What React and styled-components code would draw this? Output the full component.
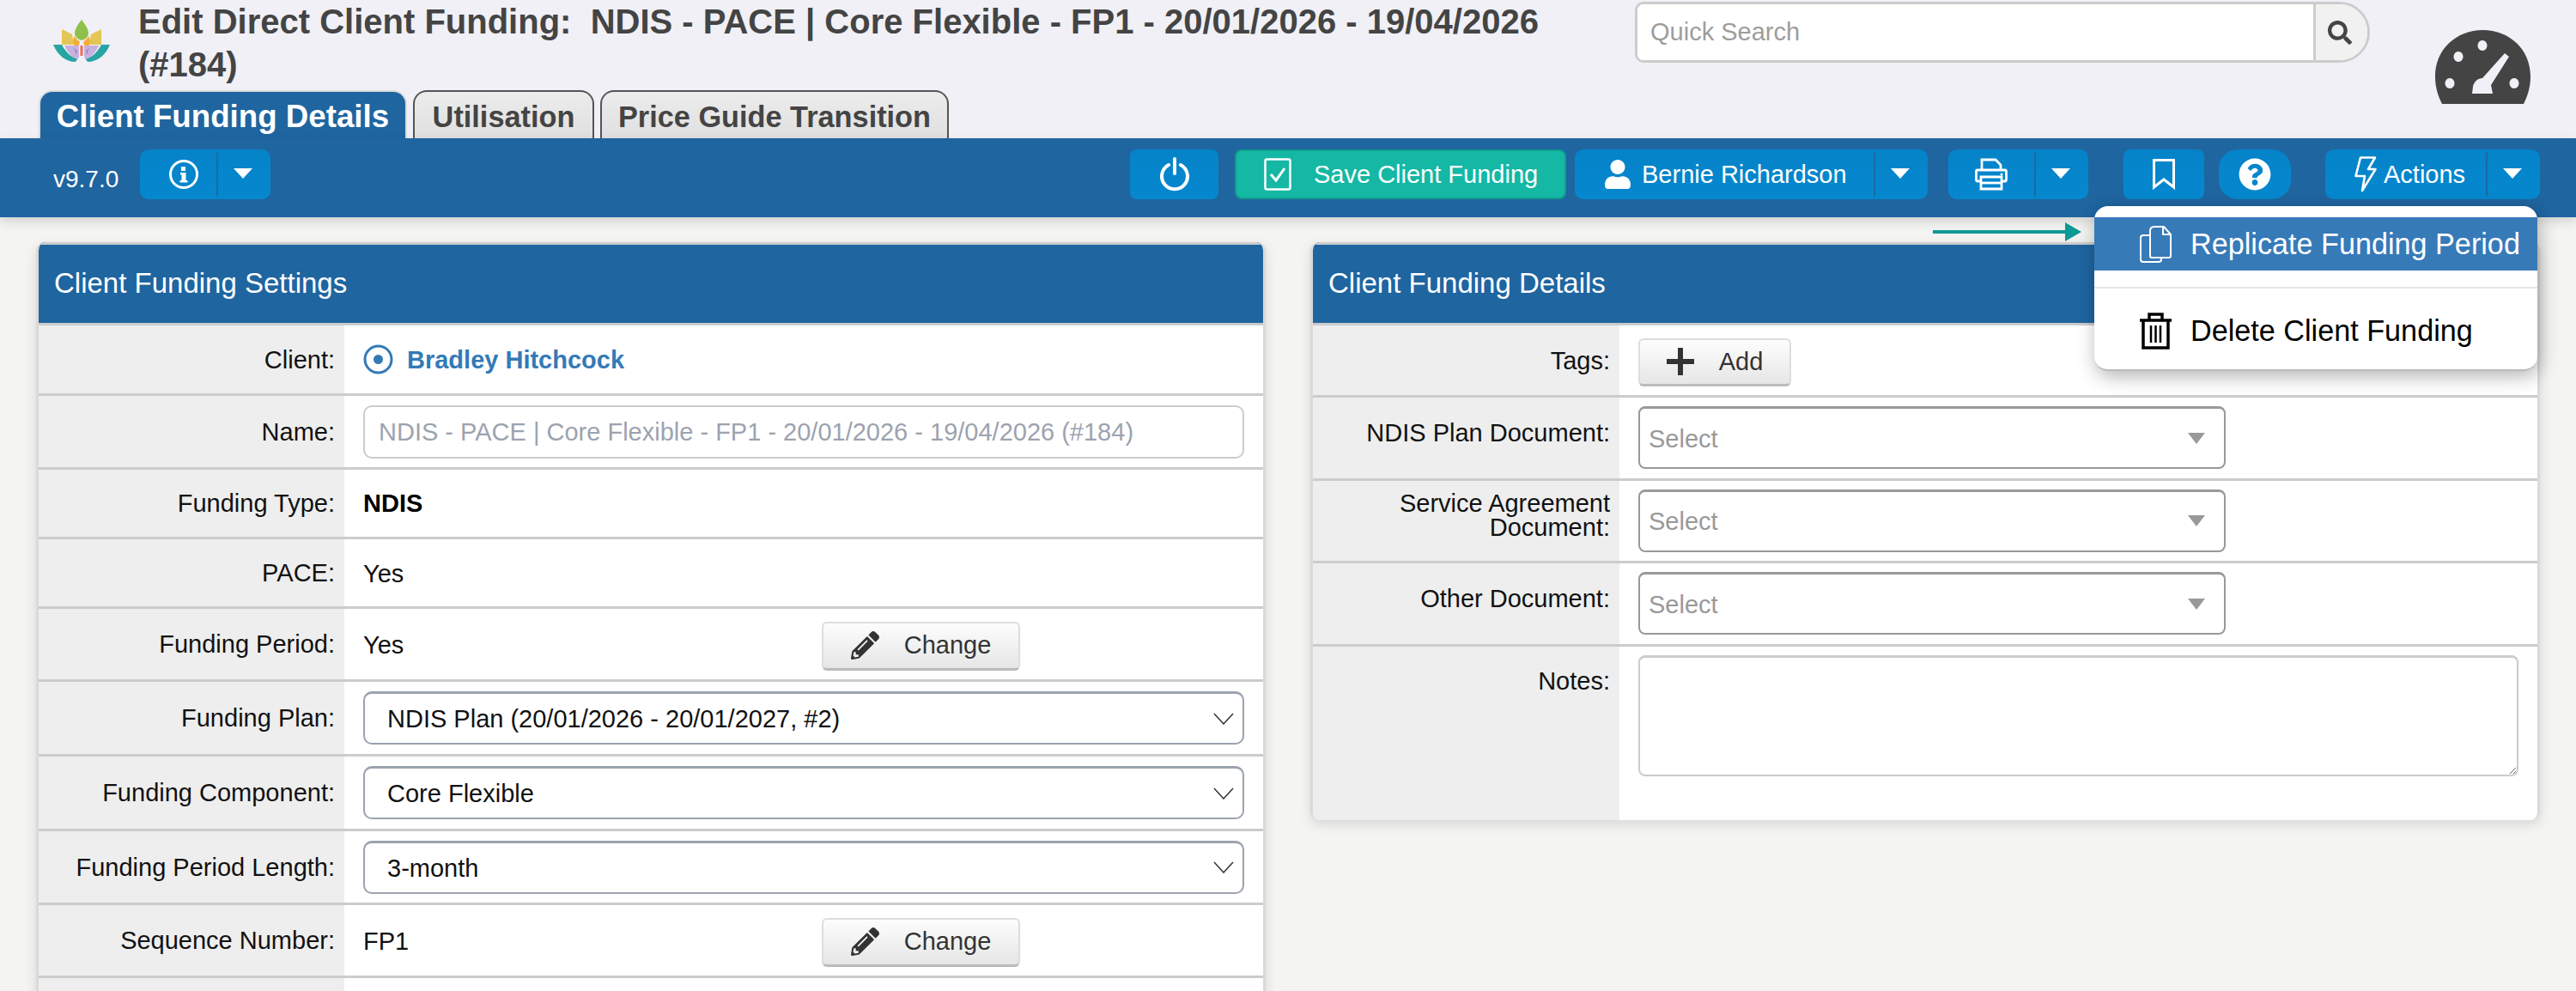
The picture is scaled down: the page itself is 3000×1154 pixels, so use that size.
import React from 'react'
import styled, { createGlobalStyle } from 'styled-components'
import { FaSearch, FaPencilAlt, FaQuestionCircle, FaUser } from 'react-icons/fa'

const GlobalStyle = createGlobalStyle`
  html, body {
    margin: 0;
    padding: 0;
    background: #f4f4f2;
    overflow: hidden;
  }
  * { box-sizing: border-box; }
  #root {
    width: 3000px;
    height: 1154px;
    overflow: hidden;
    font-family: "Liberation Sans", Arial, sans-serif;
  }
`

const leftRows = [
  { label: 'Client:', h: 82, kind: 'client' },
  { label: 'Name:', h: 86, kind: 'name' },
  { label: 'Funding Type:', h: 81, kind: 'bold', value: 'NDIS' },
  { label: 'PACE:', h: 81, kind: 'text', value: 'Yes' },
  { label: 'Funding Period:', h: 85, kind: 'change', value: 'Yes' },
  { label: 'Funding Plan:', h: 87, kind: 'select', value: 'NDIS Plan (20/01/2026 - 20/01/2027, #2)' },
  { label: 'Funding Component:', h: 87, kind: 'select', value: 'Core Flexible' },
  { label: 'Funding Period Length:', h: 86, kind: 'select', value: '3-month' },
  { label: 'Sequence Number:', h: 85, kind: 'change', value: 'FP1' },
  { label: '', h: 85, kind: 'empty' },
]

const docRows = [
  { label: 'NDIS Plan Document:' },
  { label: 'Service Agreement Document:' },
  { label: 'Other Document:' },
]

function Logo() {
  return (
    <LogoSvg viewBox='0 0 66 50'>
      <path d='M33 1 C37 6 41 12 41 17 C41 21 37 24 33 25 C29 24 25 21 25 17 C25 12 29 6 33 1 Z' fill='#8fc04a' />
      <path d='M10 12 L22 18 L24 30 H10 Z' fill='#e3c655' />
      <path d='M56 12 L44 18 L42 30 H56 Z' fill='#e3c655' />
      <path d='M24 20 L31 27 L29 33 H25 L23 27 Z' fill='#f5ab36' />
      <path d='M42 20 L35 27 L37 33 H41 L43 27 Z' fill='#f5ab36' />
      <path d='M13 31 H30 V44 L28 48 C21 44 16 38 13 31 Z' fill='#c7b1dd' />
      <path d='M53 31 H36 V44 L38 48 C45 44 50 38 53 31 Z' fill='#c7b1dd' />
      <path d='M24 34 L28 37 L27 42 Z M42 34 L38 37 L39 42 Z' fill='#a487c9' />
      <path d='M31.500 31 H34.500 V43 H31.500 Z' fill='#ee6d57' />
      <path d='M0 30 H10 C14 38 20 44 28 47 L26 50 C14 50 5 42 0 30 Z' fill='#27a5a3' />
      <path d='M66 30 H56 C52 38 46 44 38 47 L40 50 C52 50 61 42 66 30 Z' fill='#27a5a3' />
    </LogoSvg>
  )
}

function Gauge() {
  return (
    <GaugeSvg viewBox='0 0 111 86' preserveAspectRatio='none'>
      <path
        fill='#444'
        fillRule='evenodd'
        d='M8 86 C3 76 0 66 0 54 C0 22 25 0 55.500 0 C86 0 111 22 111 54 C111 66 108 76 103 86 Z
           M55 12 a5.500 6 0 1 0 .01 0 Z
           M27 25 a5.500 6 0 1 0 .01 0 Z
           M17 56 a5.500 6 0 1 0 .01 0 Z
           M92 56 a5.500 6 0 1 0 .01 0 Z
           M81 27 L86 31 L65 64 L67 74 H43 L44 66 C45 60 50 56 55 56 Z'
      />
    </GaugeSvg>
  )
}

function Caret() {
  return <CaretShape />
}

function ChevronDown() {
  return (
    <svg width='24' height='14' viewBox='0 0 24 14' fill='none' stroke='#333' strokeWidth='1.500'>
      <path d='M1 1 L12 13 L23 1' />
    </svg>
  )
}

function ChangeButton() {
  return (
    <GreyButton $w={231} $h={57}>
      <FaPencilAlt size={33} color='#333' />
      <span>Change</span>
    </GreyButton>
  )
}

function SettingsValue({ row }) {
  if (row.kind === 'client') {
    return (
      <ClientLink>
        <svg width='35' height='35' viewBox='0 0 35 35'>
          <circle cx='17.500' cy='17.500' r='15.500' fill='none' stroke='#337ab7' strokeWidth='3' />
          <circle cx='17.500' cy='17.500' r='5.500' fill='#337ab7' />
        </svg>
        <CellText>Bradley Hitchcock</CellText>
      </ClientLink>
    )
  }
  if (row.kind === 'name') {
    return <NameInput readOnly value='NDIS - PACE | Core Flexible - FP1 - 20/01/2026 - 19/04/2026 (#184)' />
  }
  if (row.kind === 'bold') return <BoldValue>{row.value}</BoldValue>
  if (row.kind === 'text') return <CellText>{row.value}</CellText>
  if (row.kind === 'change') {
    return (
      <ChangeLine>
        <CellText>{row.value}</CellText>
        <ChangeButton />
      </ChangeLine>
    )
  }
  if (row.kind === 'select') {
    return (
      <PlainSelect>
        <CellText>{row.value}</CellText>
        <ChevronDown />
      </PlainSelect>
    )
  }
  return null
}

export default function App() {
  return (
    <Page>
      <GlobalStyle />
      <Header>
        <HeaderMain>
          <Logo />
          <Title>Edit Direct Client Funding:&nbsp; NDIS - PACE | Core Flexible - FP1 - 20/01/2026 - 19/04/2026 (#184)</Title>
          <SearchBox>
            <SearchInput placeholder='Quick Search' />
            <SearchBtn><FaSearch size={28} color='#444' /></SearchBtn>
          </SearchBox>
          <Gauge />
        </HeaderMain>
        <Tabs>
          <Tab $active>Client Funding Details</Tab>
          <Tab $w={211}>Utilisation</Tab>
          <Tab $w={406}>Price Guide Transition</Tab>
        </Tabs>
      </Header>

      <Toolbar>
        <Version>v9.7.0</Version>
        <SplitButton $w={152}>
          <SplitMain $pad={33}>
            <svg width='36' height='36' viewBox='0 0 36 36'>
              <circle cx='18' cy='18' r='15.500' fill='none' stroke='#fff' strokeWidth='3' />
              <path d='M15 9 h5 v5 h-5 Z M14 16 h6.500 v9 h2 v2.500 h-9 V25 h2 v-6.500 h-1.500 Z' fill='#fff' />
            </svg>
          </SplitMain>
          <Caret />
        </SplitButton>
        <ToolbarSpacer />
        <ToolButton $w={103}>
          <svg width='36' height='40' viewBox='0 0 36 40' fill='none' stroke='#fff' strokeWidth='4' strokeLinecap='round'>
            <path d='M11 9 A15 15 0 1 0 25 9' />
            <path d='M18 2 V19' />
          </svg>
        </ToolButton>
        <SaveButton>
          <svg width='32' height='38' viewBox='0 0 32 38' fill='none' stroke='#fff' strokeWidth='2.500'>
            <rect x='1.500' y='1.500' width='29' height='35' rx='2' />
            <path d='M8 19 L14 26 L24 12' strokeWidth='3' />
          </svg>
          <span>Save Client Funding</span>
        </SaveButton>
        <SplitButton $w={411} $left={10}>
          <SplitMain $pad={33}>
            <FaUser size={34} color='#fff' />
            <span>Bernie Richardson</span>
          </SplitMain>
          <Caret />
        </SplitButton>
        <SplitButton $w={163} $left={24}>
          <SplitMain>
            <svg width='38' height='38' viewBox='0 0 38 38' fill='none' stroke='#fff' strokeWidth='2.800'>
              <path d='M8 14 V2 H24 L30 8 V14' />
              <path d='M7 27 H3 Q1.500 27 1.500 25 V16 Q1.500 14 3 14 H35 Q36.500 14 36.500 16 V25 Q36.500 27 35 27 H31' />
              <path d='M7 22 H31 V36 H7 Z' />
              <path d='M7 29 H31' />
              <circle cx='31' cy='19' r='1.500' fill='#fff' stroke='none' />
            </svg>
          </SplitMain>
          <Caret />
        </SplitButton>
        <ToolButton $w={94} $left={41}>
          <svg width='26' height='36' viewBox='0 0 26 36' fill='none' stroke='#fff' strokeWidth='3'>
            <path d='M1.500 1.500 H24.500 V33 L13 24 L1.500 33 Z' />
          </svg>
        </ToolButton>
        <ToolButton $w={84} $left={17} $round>
          <FaQuestionCircle size={38} color='#fff' />
        </ToolButton>
        <SplitButton $w={250} $left={40}>
          <SplitMain $pad={34}>
            <svg width='26' height='42' viewBox='0 0 26 42' fill='none' stroke='#fff' strokeWidth='2.600' strokeLinejoin='round'>
              <path d='M7 1.500 H24 L16 15 H24.500 L9 40 L12 23 H1.500 Z' />
            </svg>
            <ActionsLabel>Actions</ActionsLabel>
          </SplitMain>
          <Caret />
        </SplitButton>

        <Pointer>
          <svg width='173' height='22' viewBox='0 0 173 22'>
            <path d='M0 9 H154 V0 L173 11 L154 22 V13 H0 Z' fill='#0e9a94' />
          </svg>
        </Pointer>

        <ActionsMenu>
          <MenuItem $active>
            <svg width='37' height='43' viewBox='0 0 37 43' fill='none' stroke='#fff' strokeWidth='2'>
              <path d='M12 6 V35 Q12 37 14 37 H34 Q36 37 36 35 V10 L28 1 H17 Q12 1 12 6 Z' />
              <path d='M27 1 V10 H36' />
              <path d='M12 11 H4 Q1 11 1 14 V39 Q1 42 4 42 H22 Q25 42 25 39 V37' />
            </svg>
            <span>Replicate Funding Period</span>
          </MenuItem>
          <MenuDivider />
          <MenuItem>
            <svg width='37' height='43' viewBox='0 0 37 43' fill='none' stroke='#000' strokeWidth='3.500'>
              <path d='M0 9 H37' />
              <path d='M11 8 V2 H26 V8' />
              <path d='M4 9 V41 H33 V9' />
              <path d='M13 15 V35 M18.500 15 V35 M24 15 V35' strokeWidth='2.500' />
            </svg>
            <span>Delete Client Funding</span>
          </MenuItem>
        </ActionsMenu>
      </Toolbar>

      <Content>
        <Panel>
          <PanelHead>Client Funding Settings</PanelHead>
          {leftRows.map((row, i) => (
            <Row key={i} $h={row.h} $col={356}>
              <RowLabel>{row.label}</RowLabel>
              <RowValue $left={22} $right={22}>
                <SettingsValue row={row} />
              </RowValue>
            </Row>
          ))}
        </Panel>

        <Panel>
          <PanelHead>Client Funding Details</PanelHead>
          <Row $h={84} $col={357}>
            <RowLabel>Tags:</RowLabel>
            <RowValue $left={22}>
              <GreyButton $w={178} $h={56}>
                <svg width='32' height='32' viewBox='0 0 32 32'>
                  <path d='M13 0 H19 V13 H32 V19 H19 V32 H13 V19 H0 V13 H13 Z' fill='#333' />
                </svg>
                <span>Add</span>
              </GreyButton>
            </RowValue>
          </Row>
          {docRows.map((row) => (
            <Row key={row.label} $h={96.500} $col={357} $liftLabel>
              <RowLabel>{row.label}</RowLabel>
              <RowValue $left={22}>
                <DocSelect>
                  <CellText>Select</CellText>
                  <SelectCaret />
                </DocSelect>
              </RowValue>
            </Row>
          ))}
          <Row $h={202} $col={357} $last>
            <NotesLabel>Notes:</NotesLabel>
            <RowValue $left={22} $top={10}>
              <NotesArea />
            </RowValue>
          </Row>
        </Panel>
      </Content>
    </Page>
  )
}

const Page = styled.div`
  width: 3000px;
  height: 1154px;
  position: relative;
  background: #f4f4f2;
`
const Header = styled.header`
  height: 161px;
  background: #f0f0f6;
  display: flex;
  flex-direction: column;
`
const HeaderMain = styled.div`
  height: 105px;
  display: flex;
  align-items: flex-start;
  padding-left: 62px;
`
const LogoSvg = styled.svg`
  width: 66px;
  height: 50px;
  margin-top: 22px;
  flex: none;
`
const Title = styled.h1`
  margin: 0 0 0 33px;
  width: 1700px;
  flex: none;
  font-size: 40px;
  line-height: 50px;
  font-weight: 700;
  color: #444;
`
const SearchBox = styled.div`
  margin: 2px 0 0 43px;
  width: 856px;
  height: 71px;
  flex: none;
  display: flex;
  background: #fff;
  border: 3px solid #ccc;
  border-radius: 10px 36px 36px 10px;
  overflow: hidden;
`
const SearchInput = styled.input`
  flex: 1;
  min-width: 0;
  border: 0;
  outline: 0;
  padding: 0 15px;
  font: 29px "Liberation Sans", Arial, sans-serif;
  &::placeholder { color: #9d9d9d; opacity: 1; }
`
const SearchBtn = styled.div`
  width: 63px;
  flex: none;
  background: #f1f1f1;
  border-left: 3px solid #ccc;
  display: flex;
  align-items: center;
  justify-content: center;
  padding-right: 4px;
`
const GaugeSvg = styled.svg`
  width: 111px;
  height: 86px;
  margin: 35px 0 0 76px;
  flex: none;
`
const Tabs = styled.nav`
  height: 56px;
  display: flex;
  align-items: flex-end;
  gap: 7px;
  padding-left: 45px;
`
const Tab = styled.div`
  height: 56px;
  width: ${(p) => (p.$w ? `${p.$w}px` : '429px')};
  flex: none;
  display: flex;
  align-items: center;
  justify-content: center;
  font-size: ${(p) => (p.$active ? '36.700px' : '34.300px')};
  font-weight: 700;
  padding-top: 4px;
  border-radius: 16px 16px 0 0;
  border: 2px solid ${(p) => (p.$active ? '#dcdcdc' : '#555')};
  border-bottom: 0;
  color: ${(p) => (p.$active ? '#fff' : '#444')};
  background: ${(p) => (p.$active ? '#1f65a0' : 'linear-gradient(#ececec, #e0e0e0)')};
`
const Toolbar = styled.div`
  height: 92px;
  background: #1f65a0;
  display: flex;
  align-items: flex-start;
  padding: 13px 42px 0 62px;
  position: relative;
  box-shadow: 0 5px 12px rgba(0, 0, 0, 0.14);
  z-index: 2;
`
const Version = styled.span`
  width: 101px;
  flex: none;
  font-size: 28px;
  line-height: 70px;
  color: #fff;
`
const ToolbarSpacer = styled.div`
  flex: 1;
`
const ToolButton = styled.div`
  width: ${(p) => p.$w}px;
  height: 58px;
  flex: none;
  margin-left: ${(p) => p.$left || 0}px;
  display: flex;
  align-items: center;
  justify-content: center;
  border-radius: ${(p) => (p.$round ? '22px' : '8px')};
  background: linear-gradient(#0583c9, #0688ce);
`
const SaveButton = styled.div`
  width: 386px;
  height: 58px;
  flex: none;
  margin-left: 19px;
  display: flex;
  align-items: center;
  gap: 26px;
  padding-left: 32px;
  border-radius: 8px;
  border: 2px solid #109c8c;
  background: #14b8a4;
  color: #fff;
  font-size: 29px;
`
const SplitButton = styled.div`
  width: ${(p) => p.$w}px;
  height: 58px;
  flex: none;
  margin-left: ${(p) => p.$left || 0}px;
  display: flex;
  border-radius: 10px;
  background: linear-gradient(#0583c9, #0688ce);
  color: #fff;
  font-size: 29px;
`
const SplitMain = styled.div`
  flex: 1;
  min-width: 0;
  display: flex;
  align-items: center;
  gap: 11px;
  justify-content: ${(p) => (p.$pad ? 'flex-start' : 'center')};
  padding-left: ${(p) => p.$pad || 0}px;
`
const ActionsLabel = styled.span`
  margin-left: -3px;
`
const CaretShape = styled.div`
  width: 63px;
  flex: none;
  align-self: stretch;
  position: relative;
  margin: 3px 0;
  border-left: 2px solid #1b6aa3;
  &::after {
    content: '';
    position: absolute;
    top: 19px;
    left: 18px;
    border-style: solid;
    border-width: 12px 11px 0 11px;
    border-color: #fff transparent transparent transparent;
  }
`
const Pointer = styled.div`
  position: absolute;
  left: 2251px;
  top: 98px;
  line-height: 0;
  z-index: 3;
`
const ActionsMenu = styled.div`
  position: absolute;
  left: 2439px;
  top: 79px;
  width: 516px;
  height: 192px;
  padding-top: 13px;
  background: #fff;
  border-radius: 16px;
  border-bottom: 2px solid #bbb;
  box-shadow: 2px 6px 22px rgba(0, 0, 0, 0.3);
  z-index: 4;
`
const MenuItem = styled.div`
  height: 62px;
  display: flex;
  align-items: center;
  gap: 22px;
  padding-left: 53px;
  font-size: 34.200px;
  background: ${(p) => (p.$active ? '#377ab8' : 'transparent')};
  color: ${(p) => (p.$active ? '#fff' : '#000')};
  & + div { margin-top: 19px; }
`
const MenuDivider = styled.div`
  height: 2px;
  background: #e5e5e5;
  margin-bottom: 18px;
`
const Content = styled.main`
  display: flex;
  align-items: flex-start;
  gap: 52px;
  padding: 29px 0 0 42px;
`
const Panel = styled.section`
  width: 1432px;
  flex: none;
  background: #fff;
  border: 3px solid #dcdad7;
  border-top: 0;
  border-bottom: 0;
  border-radius: 10px;
  box-shadow: 0 5px 14px rgba(0, 0, 0, 0.12);
  overflow: hidden;
`
const PanelHead = styled.div`
  height: 97px;
  padding: 0 0 2px 18px;
  display: flex;
  align-items: center;
  font-size: 33px;
  color: #fff;
  background: #1f65a0;
  border-top: 3px solid #ccc;
  border-bottom: 3px solid #ccc;
`
const Row = styled.div`
  height: ${(p) => p.$h}px;
  display: grid;
  grid-template-columns: ${(p) => p.$col}px 1fr;
  border-bottom: ${(p) => (p.$last ? '0' : '3px solid #ccc')};
  & > label {
    padding-bottom: ${(p) => (p.$liftLabel ? '12px' : '0')};
  }
`
const RowLabel = styled.label`
  background: #eee;
  display: flex;
  align-items: center;
  justify-content: flex-end;
  text-align: right;
  padding-left: 8px;
  padding-right: 11px;
  font-size: 29px;
  line-height: 28px;
  color: #111;
`
const NotesLabel = styled(RowLabel)`
  align-items: flex-start;
  padding-top: 26px;
`
const RowValue = styled.div`
  padding: ${(p) => p.$top || 0}px ${(p) => p.$right || 0}px 0 ${(p) => p.$left || 0}px;
  display: flex;
  align-items: ${(p) => (p.$top ? 'flex-start' : 'center')};
  font-size: 29px;
  color: #111;
`
const CellText = styled.span`
  position: relative;
  top: 1px;
  color: inherit;
`
const ClientLink = styled.a`
  display: flex;
  align-items: center;
  gap: 16px;
  font-weight: 700;
  color: #337ab7;
`
const NameInput = styled.input`
  width: 100%;
  height: 62px;
  padding: 2px 16px 0;
  border: 2px solid #ccc;
  border-radius: 10px;
  outline: 0;
  font: 29px "Liberation Sans", Arial, sans-serif;
  color: #9ca3af;
  background: #fff;
`
const BoldValue = styled.b`
  color: #000;
`
const ChangeLine = styled.div`
  width: 100%;
  display: grid;
  grid-template-columns: 534px auto;
  align-items: center;
`
const GreyButton = styled.div`
  width: ${(p) => p.$w}px;
  height: ${(p) => p.$h}px;
  position: relative;
  top: 2px;
  display: flex;
  align-items: center;
  justify-content: center;
  gap: 29px;
  border: 2px solid #ddd;
  border-bottom: 3px solid #bbb;
  border-radius: 6px;
  background: linear-gradient(#fdfdfd, #e6e6e6);
  color: #333;
  font-size: 29px;
`
const PlainSelect = styled.div`
  width: 100%;
  height: 62px;
  padding: 0 10px 0 26px;
  display: flex;
  align-items: center;
  justify-content: space-between;
  border: 2px solid #9ca3af;
  border-top-width: 3px;
  border-radius: 10px;
  background: #fff;
  color: #111;
`
const DocSelect = styled.div`
  width: 684px;
  height: 73px;
  padding: 0 22px 0 10px;
  display: flex;
  align-items: center;
  justify-content: space-between;
  border: 2px solid #999;
  border-top-width: 3px;
  border-radius: 8px;
  color: #999;
  font-size: 29px;
`
const SelectCaret = styled.i`
  border-style: solid;
  border-width: 13px 10px 0 10px;
  border-color: #999 transparent transparent transparent;
`
const NotesArea = styled.textarea`
  width: 1025px;
  height: 141px;
  display: block;
  border: 2px solid #ccc;
  border-top-width: 3px;
  border-radius: 8px;
  outline: 0;
  background: #fff;
`
